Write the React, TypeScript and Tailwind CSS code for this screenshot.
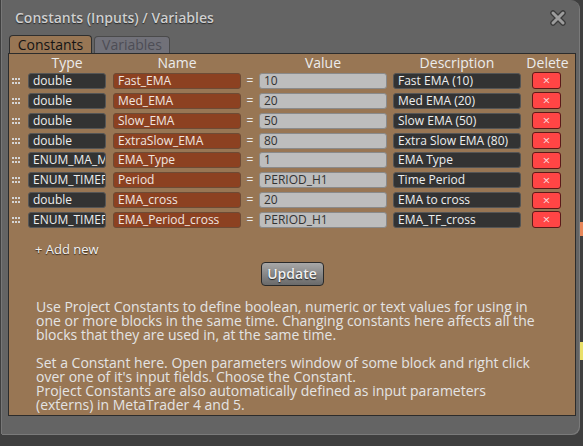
import React from "react";

const rows = [
  { t: "double", n: "Fast_EMA", v: "10", d: "Fast EMA (10)" },
  { t: "double", n: "Med_EMA", v: "20", d: "Med EMA (20)" },
  { t: "double", n: "Slow_EMA", v: "50", d: "Slow EMA (50)" },
  { t: "double", n: "ExtraSlow_EMA", v: "80", d: "Extra Slow EMA (80)" },
  { t: "ENUM_MA_METHOD", n: "EMA_Type", v: "1", d: "EMA Type" },
  { t: "ENUM_TIMEFRAMES", n: "Period", v: "PERIOD_H1", d: "Time Period" },
  { t: "double", n: "EMA_cross", v: "20", d: "EMA to cross" },
  { t: "ENUM_TIMEFRAMES", n: "EMA_Period_cross", v: "PERIOD_H1", d: "EMA_TF_cross" },
];

function Handle() {
  return (
    <svg width="9" height="6" viewBox="0 0 9 6">
      {[0, 3, 6].map((x) => (
        <g key={x}>
          <rect x={x} y={0} width="2" height="2" fill="#d6d6d6" />
          <rect x={x} y={4} width="2" height="2" fill="#d6d6d6" />
        </g>
      ))}
    </svg>
  );
}

export default function App() {
  return (
    <div
      className="relative w-[583px] h-[446px] bg-[#3f3f3f] overflow-hidden"
      style={{ fontFamily: '"Open Sans", "Noto Sans", sans-serif' }}
    >
      {/* background bits on the right */}
      <div className="absolute left-[579px] top-[222px] w-[4px] h-[14px] bg-[#e8875a]" />
      <div className="absolute left-[579px] top-[342px] w-[4px] h-[18px] bg-[#e9e06a]" />

      {/* dialog */}
      <div className="absolute left-[1px] top-0 w-[578px] h-[434px] bg-[#646464] rounded-r-[8px] border-l border-[#777] shadow-[1px_1px_0_#7a7a7a] flex flex-col">
        <div className="h-[36px] flex items-center justify-between pl-[13px] pr-[13px]">
          <span className="text-[14px] font-semibold text-[#cfcfcf] [text-shadow:0_1px_1px_#2a2a2a] leading-none">
            Constants (Inputs) / Variables
          </span>
          <svg width="16" height="16" viewBox="0 0 16 16">
            <path d="M3 3 L13 13 M13 3 L3 13" stroke="#3a3a3a" strokeWidth="5.5" strokeLinecap="round" />
            <path d="M3 3 L13 13 M13 3 L3 13" stroke="#9c9c9c" strokeWidth="3" strokeLinecap="round" />
          </svg>
        </div>

        {/* tabs */}
        <div className="flex pl-[7px] h-[17px] items-end gap-[2px]">
          <div className="w-[83px] h-[18px] bg-[#987654] border border-b-0 border-[#2f2f2f] rounded-t-[4px] flex items-center justify-center text-[14px] text-[#141414] leading-none">
            Constants
          </div>
          <div className="w-[76px] h-[17px] bg-[#717179] border border-b-0 border-[#4a4a4a] rounded-t-[4px] flex items-center justify-center text-[14px] text-[#4d4d55] leading-none">
            Variables
          </div>
        </div>

        {/* panel */}
        <div className="ml-[6px] w-[568px] h-[363px] bg-[#987654] border border-[#2c2c2c] flex flex-col">
          <div className="flex h-[17px] items-center text-[14px] text-[#ececec] leading-none">
            <div className="w-[19px]" />
            <div className="w-[78px] text-center">Type</div>
            <div className="w-[7px]" />
            <div className="w-[128px] text-center">Name</div>
            <div className="w-[18px]" />
            <div className="w-[128px] text-center">Value</div>
            <div className="w-[6px]" />
            <div className="w-[128px] text-center">Description</div>
            <div className="w-[5px]" />
            <div className="w-[43px] text-center">Delete</div>
          </div>

          <div className="flex flex-col">
            {rows.map((r, i) => (
              <div key={i} className="flex items-center h-[19.86px] text-[12px] leading-none">
                <div className="w-[19px] pl-[3px] flex items-center">
                  <Handle />
                </div>
                <div className="w-[78px] h-[16px] bg-[#333333] border border-[#555] rounded-[3px] px-[4px] flex items-center text-[#eeeeee] overflow-hidden whitespace-nowrap">
                  {r.t}
                </div>
                <div className="w-[7px]" />
                <div className="w-[128px] h-[16px] bg-[#8c4121] border border-[#6e4b35] rounded-[3px] px-[4px] flex items-center text-[#f0e6e0] overflow-hidden whitespace-nowrap">
                  {r.n}
                </div>
                <div className="w-[18px] text-center text-[#e8e8e8]">=</div>
                <div className="w-[128px] h-[16px] bg-[#bdbdbd] border border-[#8a8a8a] rounded-[3px] px-[4px] flex items-center text-[#333] overflow-hidden whitespace-nowrap">
                  {r.v}
                </div>
                <div className="w-[6px]" />
                <div className="w-[128px] h-[16px] bg-[#333333] border border-[#555] rounded-[3px] px-[4px] flex items-center text-[#eeeeee] overflow-hidden whitespace-nowrap">
                  {r.d}
                </div>
                <div className="w-[11px]" />
                <div className="w-[29px] h-[17px] bg-[#ff4545] border border-[#5a1a1a] rounded-[3px] flex items-center justify-center text-[#f8dada] text-[13px] leading-none">
                  ×
                </div>
              </div>
            ))}
          </div>

          <div className="mt-[13px] pl-[26px] text-[13px] text-[#f2f2f2] leading-none [text-shadow:0_1px_1px_#3a2a1a]">
            + Add new
          </div>

          <div className="flex justify-center mt-[6px]">
            <div className="w-[63px] h-[24px] rounded-[4px] border border-[#2a2a2a] bg-gradient-to-b from-[#a8a8a8] to-[#6a6a6a] flex items-center justify-center text-[14px] text-[#f0f0f0] font-semibold [text-shadow:0_1px_1px_#222] leading-none">
              Update
            </div>
          </div>

          <div className="mt-[14px] pl-[27px] w-[530px] text-[14px] leading-[14px] text-[#e4e4e4]">
            <p>
              Use Project Constants to define boolean, numeric or text values for using in one or more blocks in the same time. Changing constants here affects all the blocks that they are used in, at the same time.
            </p>
            <p className="mt-[14px]">
              Set a Constant here. Open parameters window of some block and right click over one of it's input fields. Choose the Constant.
              <br />
              Project Constants are also automatically defined as input parameters (externs) in MetaTrader 4 and 5.
            </p>
          </div>
        </div>
      </div>
    </div>
  );
}
